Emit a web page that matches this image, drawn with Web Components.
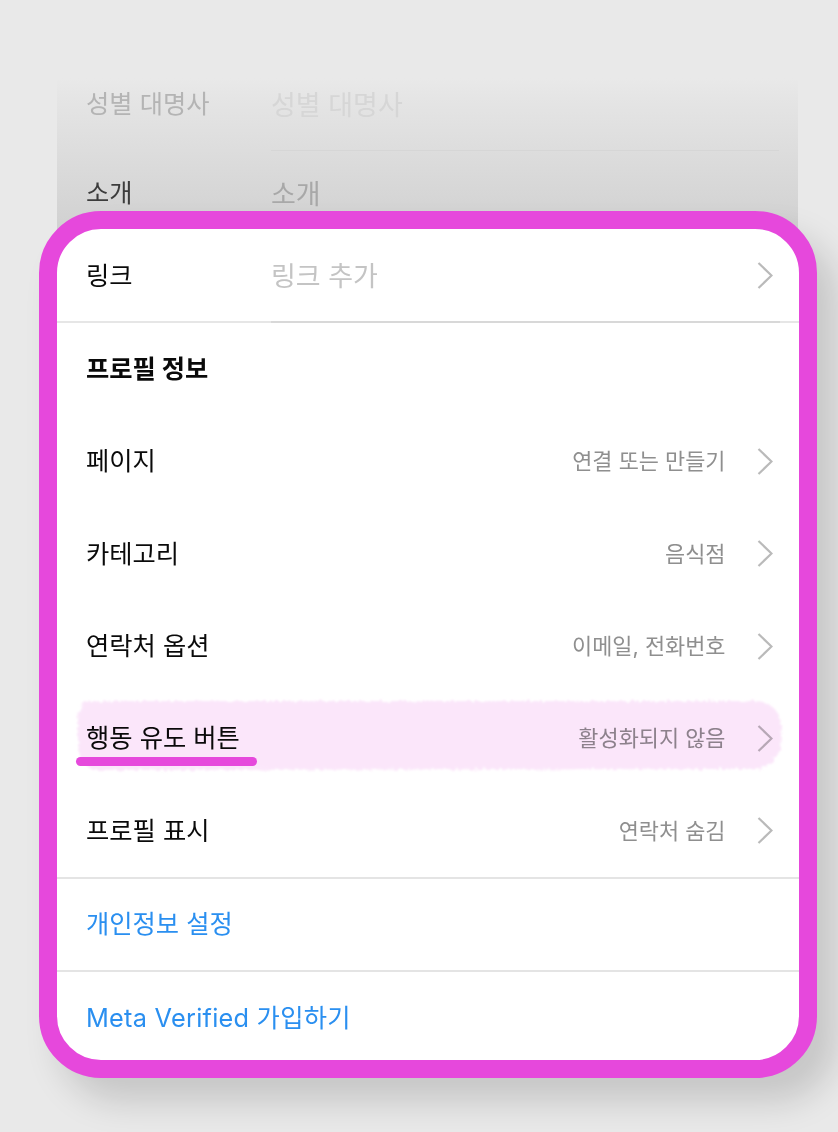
<!DOCTYPE html>
<html lang="ko">
<head>
<meta charset="utf-8">
<title>프로필 편집</title>
<style>
html,body{margin:0;padding:0;background:#e9e9e9}
body{width:838px;height:1132px;overflow:hidden;font-family:Inter,"Noto Sans CJK KR",sans-serif}
</style>
</head>
<body>
<template id="t-page">
<style>
:host{display:block;width:838px;height:1132px;box-sizing:border-box;padding-top:78px;background:#e9e9e9;overflow:hidden}
</style>
<slot></slot>
</template>

<template id="t-behind">
<style>
:host{display:block;box-sizing:border-box;margin-left:57px;width:741px;height:192px;background:linear-gradient(#e9e9e9 0,#e5e5e5 20px,#d1d1d1 150px,#d0d0d0 100%);font-size:25.3px;line-height:30px}
.row{display:flex;align-items:center;padding-left:29px}
.r1{height:52px}
.r2{height:30px;margin-top:27px}
.l{width:185px}
.v{font-size:27px;padding-top:3px}
.sep{height:1px;margin:20px 19px 0 214px;background:#d6d6d6}
.r1 .l{color:#b4b4b4}.r1 .v{color:#d6d6d6}
.r2 .l{color:#3c3c3c}.r2 .v{color:#a8a8a8}
</style>
<div class="row r1"><span class="l">성별 대명사</span><span class="v">성별 대명사</span></div>
<div class="sep"></div>
<div class="row r2"><span class="l">소개</span><span class="v">소개</span></div>
</template>

<template id="t-card">
<style>
:host{display:block;position:relative;box-sizing:border-box;margin:-59px 0 0 39px;width:778px;height:867px;border:18px solid #e648dc;border-radius:62px;background:#fff;box-shadow:20px 24px 34px rgba(0,0,0,.15)}
.in{display:block;border-radius:44px;overflow:hidden;height:100%}
</style>
<div class="in"><slot></slot></div>
</template>

<template id="t-row">
<style>
:host{display:flex;position:relative;align-items:center;box-sizing:border-box;height:92.3px;padding:0 26px 0 29px;font-size:25.3px;color:#0a0a0a;line-height:30px}
:host([kind=heading]){font-weight:700}
:host([kind=action]){height:91px;color:#2a8ff0}
:host([kind=action][latin]){height:92.4px;padding-top:1px;letter-spacing:.25px}
:host([kind=link]){height:92px;padding-top:1px}
.label{flex:none}
:host([kind=link]) .label{width:185px}
.value{margin-left:auto;font-size:21.9px;color:#8f8f8f}
:host([kind=link]) .value{margin-left:0;font-size:27px;padding-top:2px;color:#c4c4c4}
svg{display:none;flex:none;width:16px;height:27px;margin-left:31.5px}
:host([chevron]) svg{display:block}
:host([kind=link]) svg{margin-left:auto}
path{fill:none;stroke:#bababa;stroke-width:2.2}
</style>
<span class="label"><slot></slot></span>
<span class="value"><slot name="value"></slot></span>
<svg viewBox="0 0 16 27" aria-hidden="true"><path d="M1.5 1 L14.5 13.5 L1.5 26"/></svg>
<slot name="over"></slot>
</template>

<template id="t-divider">
<style>
:host{display:block;height:2px;background:#e4e4e4}
:host([two-tone]){background:linear-gradient(90deg,#e6e6e6 0,#e6e6e6 214px,#d8d8d8 214px,#d8d8d8 723px,#e6e6e6 723px)}
</style>
</template>

<template id="t-brush">
<style>
:host{position:absolute;left:18px;top:9px;width:708px;height:70px;mix-blend-mode:multiply;pointer-events:none}
svg{position:absolute;inset:0;width:100%;height:100%;overflow:visible}
</style>
<svg viewBox="0 0 708 70" aria-hidden="true">
<defs>
<filter id="rough" x="-3%" y="-20%" width="106%" height="140%">
<feTurbulence type="fractalNoise" baseFrequency="0.25" numOctaves="2" seed="4"/>
<feDisplacementMap in="SourceGraphic" scale="6"/>
<feGaussianBlur stdDeviation="1"/>
</filter>
<filter id="soft" x="-3%" y="-50%" width="106%" height="200%">
<feTurbulence type="fractalNoise" baseFrequency="0.3" numOctaves="1" seed="7"/>
<feDisplacementMap in="SourceGraphic" scale="1.5"/>
<feGaussianBlur stdDeviation="0.5"/>
</filter>
</defs>
<path d="M14 0 H682 Q707 2 707 34 Q707 62 682 68 L18 69 Q3 62 3 40 V16 Q4 2 14 0 Z" fill="#fbe6fa" filter="url(#rough)"/>
<rect x="1" y="56" width="181" height="9" rx="4.5" fill="#e648dc" filter="url(#soft)"/>
</svg>
</template>

<profile-page>
  <behind-panel></behind-panel>
  <profile-card>
    <profile-row kind="link" chevron>링크<span slot="value">링크 추가</span></profile-row>
    <row-divider two-tone></row-divider>
    <profile-row kind="heading">프로필 정보</profile-row>
    <profile-row chevron>페이지<span slot="value">연결 또는 만들기</span></profile-row>
    <profile-row chevron>카테고리<span slot="value">음식점</span></profile-row>
    <profile-row chevron>연락처 옵션<span slot="value">이메일, 전화번호</span></profile-row>
    <profile-row chevron>행동 유도 버튼<span slot="value">활성화되지 않음</span><brush-mark slot="over"></brush-mark></profile-row>
    <profile-row chevron>프로필 표시<span slot="value">연락처 숨김</span></profile-row>
    <row-divider></row-divider>
    <profile-row kind="action">개인정보 설정</profile-row>
    <row-divider></row-divider>
    <profile-row kind="action" latin>Meta Verified 가입하기</profile-row>
  </profile-card>
</profile-page>

<script>
function define(name, tpl){
  customElements.define(name, class extends HTMLElement{
    constructor(){
      super();
      this.attachShadow({mode:'open'}).appendChild(document.getElementById(tpl).content.cloneNode(true));
    }
  });
}
define('profile-page','t-page');
define('behind-panel','t-behind');
define('profile-card','t-card');
define('profile-row','t-row');
define('row-divider','t-divider');
define('brush-mark','t-brush');
</script>
</body>
</html>
